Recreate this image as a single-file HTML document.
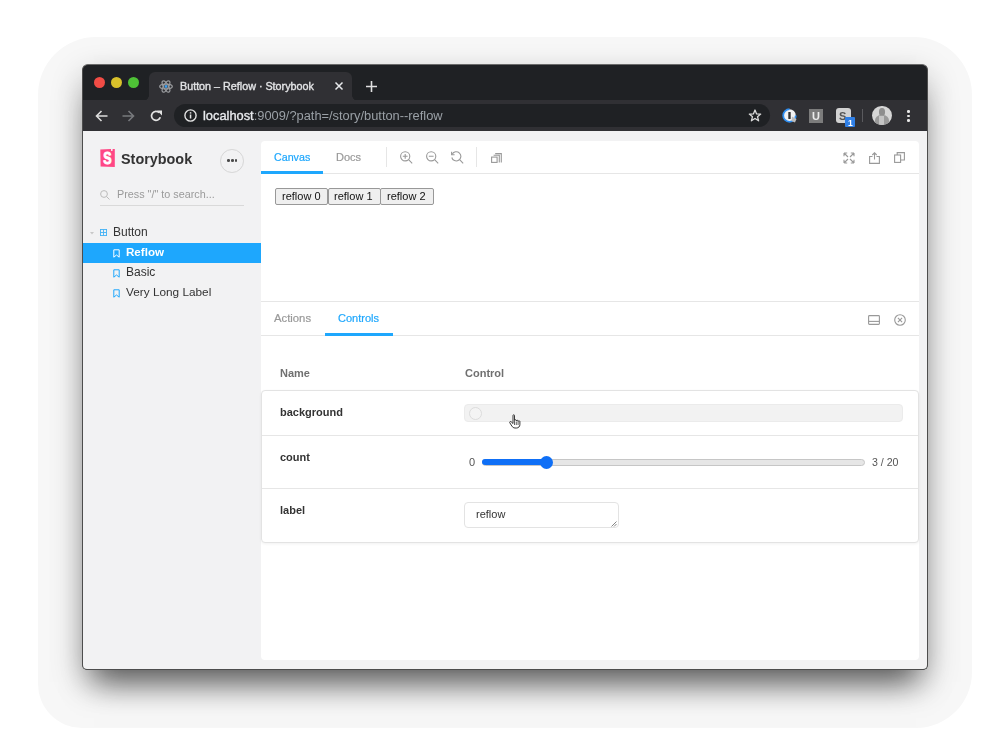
<!DOCTYPE html>
<html><head><meta charset="utf-8">
<style>
*{box-sizing:border-box;margin:0;padding:0}
html,body{width:1000px;height:753px;overflow:hidden;background:#fff;font-family:"Liberation Sans",sans-serif}
.a{position:absolute}
.t{position:absolute;white-space:nowrap;will-change:transform}
#sh1{left:38px;top:37px;width:934px;height:691px;border-radius:58px 58px 56px 44px;background:#f7f7f7}
#wsh{left:85px;top:67px;width:840px;height:600px;border-radius:4px;background:#888;box-shadow:0 12px 32px 3px rgba(0,0,0,.24),0 24px 30px -9px rgba(0,0,0,.55)}
#win{left:82px;top:64px;width:846px;height:606px;border:1px solid #4d4d4d;border-top-color:#6a6a6a;border-radius:6px 6px 5px 5px;background:#1f2124}
#tab{left:149px;top:72px;width:203px;height:29px;background:#303034;border-radius:6px 6px 0 0}
.fl{width:6px;height:6px;top:94.5px}
#toolbar{left:83px;top:100px;width:844px;height:31px;background:#303034}
#url{left:174px;top:104px;width:596px;height:23px;background:#1f2124;border-radius:12px}
#content{left:83px;top:131px;width:844px;height:538px;background:#f2f2f3;border-radius:0 0 4px 4px}
#panel{left:261px;top:141px;width:658px;height:519px;background:#fff;border-radius:4px}
</style></head><body>
<div class="a" id="sh1"></div>
<div class="a" id="wsh"></div>
<div class="a" id="win"></div>
<!-- title bar -->
<div class="a" style="left:94px;top:77px;width:11px;height:11px;border-radius:50%;background:#f14c45"></div>
<div class="a" style="left:111px;top:77px;width:11px;height:11px;border-radius:50%;background:#d9c12b"></div>
<div class="a" style="left:128px;top:77px;width:11px;height:11px;border-radius:50%;background:#4ec236"></div>
<div class="a" id="tab"></div>
<div class="a fl" style="left:143px;background:radial-gradient(circle at 0 0,#1f2124 5.6px,#303034 6.2px)"></div>
<div class="a fl" style="left:352px;background:radial-gradient(circle at 100% 0,#1f2124 5.6px,#303034 6.2px)"></div>
<!-- react icon -->
<svg class="a" style="left:159px;top:79.5px" width="14" height="13" viewBox="0 0 14 13">
 <g fill="none" stroke="#9a9c9f" stroke-width="1.25">
  <ellipse cx="7" cy="6.5" rx="6.3" ry="2.4"/>
  <ellipse cx="7" cy="6.5" rx="6.3" ry="2.4" transform="rotate(60 7 6.5)"/>
  <ellipse cx="7" cy="6.5" rx="6.3" ry="2.4" transform="rotate(120 7 6.5)"/>
 </g>
 <circle cx="7" cy="6.5" r="1.4" fill="#3ea0f0"/>
</svg>
<div class="t" style="left:180px;top:80.7px;font-size:10.75px;line-height:11px;color:#e3e4e6;-webkit-text-stroke:0.35px #e3e4e6">Button – Reflow · Storybook</div>
<svg class="a" style="left:334px;top:81px" width="10" height="10" viewBox="0 0 10 10"><path d="M1.5 1.5L8.5 8.5M8.5 1.5L1.5 8.5" stroke="#e8eaed" stroke-width="1.5"/></svg>
<svg class="a" style="left:365.5px;top:80.5px" width="11" height="11" viewBox="0 0 11 11"><path d="M5.5 0V11M0 5.5H11" stroke="#e0e0e0" stroke-width="1.6"/></svg>
<!-- toolbar -->
<div class="a" id="toolbar"></div>
<svg class="a" style="left:95px;top:110px" width="13" height="12" viewBox="0 0 13 12"><path d="M12.5 6H1.5M6.5 1L1.5 6L6.5 11" fill="none" stroke="#dcdcdc" stroke-width="1.6"/></svg>
<svg class="a" style="left:122px;top:110px" width="13" height="12" viewBox="0 0 13 12"><path d="M0.5 6H11.5M6.5 1L11.5 6L6.5 11" fill="none" stroke="#77797c" stroke-width="1.6"/></svg>
<svg class="a" style="left:150px;top:110px" width="13" height="12" viewBox="0 0 13 12"><path d="M10.3 7.2A4.5 4.5 0 1 1 9.2 2.6" fill="none" stroke="#e3e3e3" stroke-width="1.7"/><path d="M7 0.5H12V5.5Z" fill="#e3e3e3"/></svg>
<div class="a" id="url"></div>
<svg class="a" style="left:184px;top:109px" width="13" height="13" viewBox="0 0 13 13"><circle cx="6.5" cy="6.5" r="5.6" fill="none" stroke="#e3e3e3" stroke-width="1.4"/><rect x="5.8" y="5.5" width="1.5" height="4" fill="#e3e3e3"/><rect x="5.8" y="3.2" width="1.5" height="1.4" fill="#e3e3e3"/></svg>
<div class="t" style="left:203px;top:109.1px;font-size:12.85px;line-height:13px;color:#9aa0a6"><span style="color:#e8eaed;-webkit-text-stroke:0.35px #e8eaed">localhost</span>:9009/?path=/story/button--reflow</div>
<svg class="a" style="left:748px;top:109px" width="14" height="13" viewBox="0 0 14 13"><path d="M7 1L8.6 4.9L12.7 5.1L9.5 7.7L10.6 11.8L7 9.5L3.4 11.8L4.5 7.7L1.3 5.1L5.4 4.9Z" fill="none" stroke="#dcdcdc" stroke-width="1.3" stroke-linejoin="round"/></svg>
<!-- extensions -->
<svg class="a" style="left:782px;top:108px" width="16" height="16" viewBox="0 0 16 16"><circle cx="7.5" cy="7.5" r="6.3" fill="#f2f2f2"/><path d="M7.5 1.2A6.3 6.3 0 1 0 13.8 7.5" fill="none" stroke="#2f8ef0" stroke-width="1.8"/><rect x="6.3" y="4" width="2.4" height="7" rx="0.6" fill="#333"/><path d="M10 8.5L14.5 11L13 14.5L9.5 13Z" fill="#bdbdbd"/></svg>
<div class="a" style="left:809px;top:108.5px;width:14px;height:14px;background:#7c7c7c"></div>
<div class="t" style="left:811.8px;top:110.5px;font-size:11px;line-height:11px;font-weight:bold;color:#ececec">U</div>
<div class="a" style="left:836px;top:108px;width:14.5px;height:14.5px;background:#d2d2d2;border-radius:3px"></div>
<div class="t" style="left:839px;top:110.5px;font-size:11px;line-height:11px;font-weight:bold;color:#555">S</div>
<div class="a" style="left:845px;top:117.2px;width:10px;height:10.2px;background:#2f7fe6;border-radius:1px"></div>
<div class="t" style="left:848px;top:118.6px;font-size:8.5px;line-height:8.5px;font-weight:bold;color:#fff">1</div>
<div class="a" style="left:862px;top:108.5px;width:1px;height:13.5px;background:#5a5a5e"></div>
<div class="a" style="left:872px;top:105.6px;width:19.5px;height:19.5px;border-radius:50%;overflow:hidden;background:#d6d6d6">
 <div class="a" style="left:7px;top:2px;width:6px;height:8px;border-radius:45%;background:#8e8e8e"></div>
 <div class="a" style="left:3px;top:9px;width:14px;height:14px;border-radius:40% 40% 0 0;background:#9a9a9a"></div>
 <div class="a" style="left:7px;top:10px;width:5px;height:9px;background:#c4c4c4"></div>
</div>
<div class="a" style="left:907px;top:110px;width:2.6px;height:2.6px;border-radius:50%;background:#e8e8e8"></div>
<div class="a" style="left:907px;top:114.7px;width:2.6px;height:2.6px;border-radius:50%;background:#e8e8e8"></div>
<div class="a" style="left:907px;top:119.4px;width:2.6px;height:2.6px;border-radius:50%;background:#e8e8e8"></div>
<!-- content -->
<div class="a" id="content"></div>
<!-- sidebar -->
<svg class="a" style="left:100px;top:149px" width="15" height="18" viewBox="0 0 15 18"><path d="M0.3 0.6L11 0.1V2L12.6 1.8V0L14.8 0.1V17.9L0.6 17.5Z" fill="#ff4785"/><text x="7.5" y="14.6" text-anchor="middle" font-family="Liberation Sans" font-weight="bold" font-size="16" fill="#fff" stroke="#fff" stroke-width="0.9" transform="translate(7.5 0) scale(0.78 1) translate(-7.5 0)">S</text></svg>
<div class="t" style="left:120.5px;top:151.5px;font-size:14.4px;line-height:14.4px;font-weight:bold;color:#333">Storybook</div>
<div class="a" style="left:220px;top:148.8px;width:23.8px;height:23.8px;border-radius:50%;border:1px solid #d6d6d6"></div>
<div class="a" style="left:227.1px;top:159.2px;width:2.7px;height:2.7px;border-radius:50%;background:#4a4a4a"></div>
<div class="a" style="left:230.95px;top:159.2px;width:2.7px;height:2.7px;border-radius:50%;background:#4a4a4a"></div>
<div class="a" style="left:234.8px;top:159.2px;width:2.7px;height:2.7px;border-radius:50%;background:#4a4a4a"></div>
<svg class="a" style="left:100px;top:190px" width="10" height="10" viewBox="0 0 10 10"><circle cx="4" cy="4" r="3.4" fill="none" stroke="#bbb" stroke-width="1"/><path d="M6.5 6.5L9.5 9.5" stroke="#bbb" stroke-width="1"/></svg>
<div class="t" style="left:116.5px;top:188.7px;font-size:10.8px;line-height:10.8px;color:#9a9a9a">Press "/" to search...</div>
<div class="a" style="left:100px;top:205px;width:144px;height:1px;background:#d9d9d9"></div>
<svg class="a" style="left:90.3px;top:231.5px" width="4" height="3" viewBox="0 0 4 3"><path d="M0 0H4L2 2.5Z" fill="#c8c8c8"/></svg>
<svg class="a" style="left:100px;top:229px" width="7" height="7" viewBox="0 0 7 7"><g fill="none" stroke="#44b2f5" stroke-width="0.9"><rect x="0.45" y="0.45" width="6.1" height="6.1"/><path d="M3.5 0.5V6.5M0.5 3.5H6.5"/></g></svg>
<div class="t" style="left:113px;top:225.6px;font-size:12px;line-height:12px;color:#333">Button</div>
<div class="a" style="left:83px;top:243px;width:178px;height:20px;background:#1ea7fd"></div>
<svg class="a" style="left:113px;top:249px" width="7" height="9" viewBox="0 0 7 9"><path d="M0.8 0.8H6.2V8.2L3.5 6L0.8 8.2Z" fill="none" stroke="#fff" stroke-width="1" stroke-linejoin="round"/></svg>
<div class="t" style="left:125.7px;top:246.3px;font-size:11.6px;line-height:11.6px;font-weight:bold;color:#fff">Reflow</div>
<svg class="a" style="left:113px;top:269px" width="7" height="9" viewBox="0 0 7 9"><path d="M0.8 0.8H6.2V8.2L3.5 6L0.8 8.2Z" fill="none" stroke="#1ea7fd" stroke-width="1" stroke-linejoin="round"/></svg>
<div class="t" style="left:125.7px;top:266.2px;font-size:12px;line-height:12px;color:#333">Basic</div>
<svg class="a" style="left:113px;top:289px" width="7" height="9" viewBox="0 0 7 9"><path d="M0.8 0.8H6.2V8.2L3.5 6L0.8 8.2Z" fill="none" stroke="#1ea7fd" stroke-width="1" stroke-linejoin="round"/></svg>
<div class="t" style="left:125.7px;top:286.5px;font-size:11.8px;line-height:11.8px;color:#333">Very Long Label</div>
<!-- main panel -->
<div class="a" id="panel"></div>
<!-- canvas toolbar -->
<div class="a" style="left:261px;top:173px;width:658px;height:1px;background:#e6e6e6"></div>
<div class="t" style="left:274.1px;top:151.6px;font-size:10.7px;line-height:11px;color:#1ea7fd;-webkit-text-stroke:0.2px #1ea7fd">Canvas</div>
<div class="a" style="left:261px;top:171px;width:62px;height:3px;background:#1ea7fd"></div>
<div class="t" style="left:336.3px;top:151.6px;font-size:11px;line-height:11px;color:#999;-webkit-text-stroke:0.2px #999">Docs</div>
<div class="a" style="left:386px;top:147px;width:1px;height:20px;background:#e6e6e6"></div>
<svg class="a" style="left:400px;top:151px" width="13" height="13" viewBox="0 0 13 13"><g fill="none" stroke="#999" stroke-width="1.1"><circle cx="5.2" cy="5.3" r="4.6"/><path d="M8.6 8.7L12.2 12.3M5.2 2.9V7.7M2.8 5.3H7.6"/></g></svg>
<svg class="a" style="left:425.5px;top:151px" width="13" height="13" viewBox="0 0 13 13"><g fill="none" stroke="#999" stroke-width="1.1"><circle cx="5.2" cy="5.3" r="4.6"/><path d="M8.6 8.7L12.2 12.3M2.8 5.3H7.6"/></g></svg>
<svg class="a" style="left:450.5px;top:151px" width="13" height="13" viewBox="0 0 13 13"><g fill="none" stroke="#999" stroke-width="1.1"><path d="M1.2 3.2A4.6 4.6 0 1 1 0.8 6.5"/><path d="M8.6 8.7L12.2 12.3"/><path d="M0.6 0.8V3.8H3.6"/></g></svg>
<div class="a" style="left:476px;top:147px;width:1px;height:20px;background:#e6e6e6"></div>
<svg class="a" style="left:491px;top:152.5px" width="11" height="10" viewBox="0 0 11 10"><g fill="none" stroke="#999" stroke-width="1.1"><rect x="0.6" y="4.1" width="5.5" height="5.3"/><path d="M2.6 2.3H8.3V9.4M4.2 0.6H10.3V9.4"/></g></svg>
<svg class="a" style="left:843px;top:152px" width="12" height="12" viewBox="0 0 12 12"><g fill="none" stroke="#999" stroke-width="1.1"><path d="M1 1L5 5M1 1H4.2M1 1V4.2M11 1L7 5M11 1H7.8M11 1V4.2M1 11L5 7M1 11H4.2M1 11V7.8M11 11L7 7M11 11H7.8M11 11V7.8"/></g></svg>
<svg class="a" style="left:868.5px;top:151.5px" width="11" height="12" viewBox="0 0 11 12"><g fill="none" stroke="#999" stroke-width="1.1"><path d="M3.5 4.5H0.6V11.4H10.4V4.5H7.5M5.5 7.5V0.8M3.3 3L5.5 0.8L7.7 3"/></g></svg>
<svg class="a" style="left:894px;top:152px" width="11" height="11" viewBox="0 0 11 11"><g fill="none" stroke="#999" stroke-width="1.1"><rect x="0.6" y="3" width="6" height="7.4"/><path d="M3.2 3V0.6H10.4V8H6.6"/></g></svg>
<!-- story buttons -->
<div class="a" style="left:275px;top:188px;width:53px;height:17px;background:#efefef;border:1px solid #989898;border-radius:2px"></div>
<div class="a" style="left:327.5px;top:188px;width:53px;height:17px;background:#efefef;border:1px solid #989898;border-radius:2px"></div>
<div class="a" style="left:380.2px;top:188px;width:53.6px;height:17px;background:#efefef;border:1px solid #989898;border-radius:2px"></div>
<div class="t" style="left:281.6px;top:191.1px;font-size:11px;line-height:11px;color:#111">reflow 0</div>
<div class="t" style="left:334.2px;top:191.1px;font-size:11px;line-height:11px;color:#111">reflow 1</div>
<div class="t" style="left:387.2px;top:191.1px;font-size:11px;line-height:11px;color:#111">reflow 2</div>
<!-- addons -->
<div class="a" style="left:261px;top:301px;width:658px;height:1px;background:#e6e6e6"></div>
<div class="a" style="left:261px;top:335px;width:658px;height:1px;background:#e6e6e6"></div>
<div class="t" style="left:274.4px;top:313.3px;font-size:11.3px;line-height:11px;color:#999;-webkit-text-stroke:0.2px #999">Actions</div>
<div class="t" style="left:338.2px;top:313.3px;font-size:11px;line-height:11px;color:#1ea7fd;-webkit-text-stroke:0.2px #1ea7fd">Controls</div>
<div class="a" style="left:325px;top:333px;width:68px;height:3px;background:#1ea7fd"></div>
<svg class="a" style="left:868px;top:314.5px" width="12" height="10" viewBox="0 0 12 10"><g fill="none" stroke="#999" stroke-width="1.1"><rect x="0.6" y="0.6" width="10.8" height="8.8" rx="0.8"/><path d="M0.6 6.4H11.4"/></g></svg>
<svg class="a" style="left:893.5px;top:313.5px" width="12" height="12" viewBox="0 0 12 12"><g fill="none" stroke="#999" stroke-width="1.1"><circle cx="6" cy="6" r="5.3"/><path d="M3.9 3.9L8.1 8.1M8.1 3.9L3.9 8.1"/></g></svg>
<div class="t" style="left:279.5px;top:368.2px;font-size:11px;line-height:11px;font-weight:bold;color:#707070">Name</div>
<div class="t" style="left:465px;top:368.2px;font-size:11px;line-height:11px;font-weight:bold;color:#707070">Control</div>
<!-- table card -->
<div class="a" style="left:261px;top:390px;width:658px;height:153px;background:#fff;border:1px solid #e3e3e3;border-radius:4px;box-shadow:0 1px 3px rgba(0,0,0,.06)"></div>
<div class="a" style="left:262px;top:435px;width:656px;height:1px;background:#e6e6e6"></div>
<div class="a" style="left:262px;top:488px;width:656px;height:1px;background:#e6e6e6"></div>
<div class="t" style="left:279.5px;top:407px;font-size:11px;line-height:11px;font-weight:bold;color:#333">background</div>
<div class="t" style="left:279.5px;top:452px;font-size:11px;line-height:11px;font-weight:bold;color:#333">count</div>
<div class="t" style="left:279.5px;top:504.7px;font-size:11px;line-height:11px;font-weight:bold;color:#333">label</div>
<!-- color control -->
<div class="a" style="left:464px;top:404px;width:439px;height:18px;background:#f2f2f2;border:1px solid #ebebeb;border-radius:4px"></div>
<div class="a" style="left:469px;top:406.5px;width:13px;height:13px;border-radius:50%;border:1px solid #dcdcdc;background:#f4f4f4"></div>
<!-- cursor -->
<svg class="a" style="left:509px;top:414px" width="14" height="15" viewBox="0 0 14 15"><path d="M4 1.5C4 0.5 5.5 0.5 5.5 1.5V6.5C5.5 5.5 7.3 5.5 7.3 6.5V7C7.3 6 9.1 6 9.1 7V7.5C9.1 6.6 10.9 6.6 10.9 7.5V10.5C10.9 12.5 9.5 14 7.5 14H6C4.5 14 3.5 13 2.8 12L0.8 8.8C0.3 8 1.3 7 2.2 7.8L4 9.5Z" fill="#fff" stroke="#222" stroke-width="0.9" stroke-linejoin="round"/><path d="M5.5 7V11M7.3 7.5V11M9.1 8V11" stroke="#222" stroke-width="0.7"/></svg>
<!-- slider -->
<div class="t" style="left:468.6px;top:456.9px;font-size:11px;line-height:11px;color:#555">0</div>
<div class="a" style="left:481.5px;top:458.5px;width:383.5px;height:7px;background:#e6e6e6;border:1px solid #c6c6c6;border-radius:4px"></div>
<div class="a" style="left:481.5px;top:459px;width:65px;height:6px;background:#0f6ff6;border-radius:3px 0 0 3px"></div>
<div class="a" style="left:539.8px;top:455.8px;width:13px;height:13px;border-radius:50%;background:#0f6ff6"></div>
<div class="t" style="left:872px;top:456.8px;font-size:10.6px;line-height:11px;color:#555">3 / 20</div>
<!-- textarea -->
<div class="a" style="left:464px;top:502px;width:155px;height:26px;background:#fff;border:1px solid #e3e3e3;border-radius:4px"></div>
<div class="t" style="left:475.5px;top:508.7px;font-size:11px;line-height:11px;color:#333">reflow</div>
<svg class="a" style="left:611px;top:521px" width="6" height="6" viewBox="0 0 6 6"><path d="M5.5 0.5L0.5 5.5M5.5 3L3 5.5" stroke="#777" stroke-width="0.9"/></svg>
</body></html>
